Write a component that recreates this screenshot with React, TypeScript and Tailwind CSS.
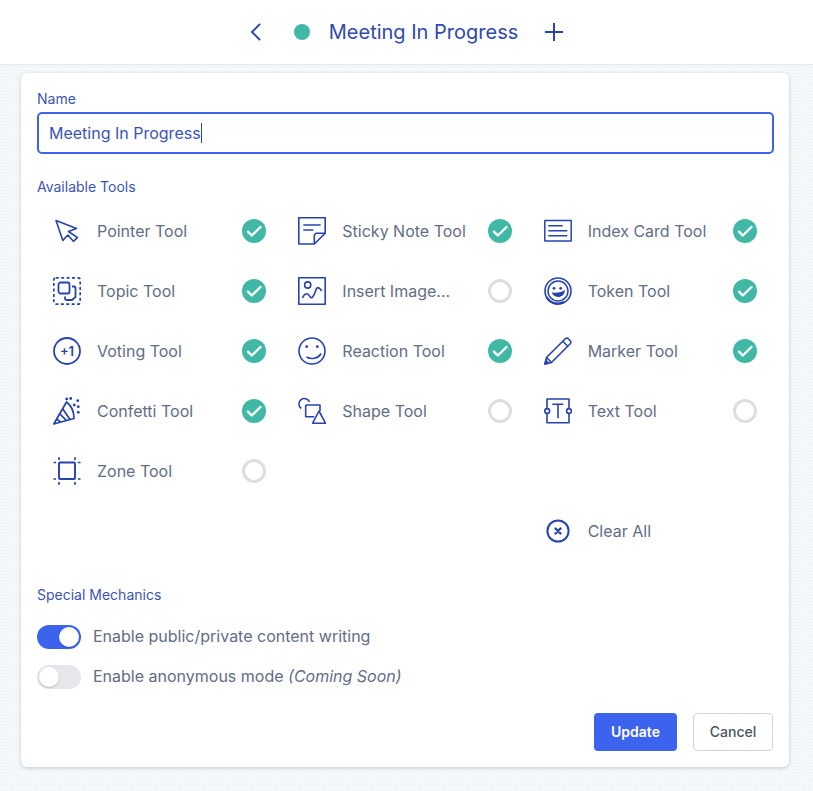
import React from "react";

const S = "#2743ad";

function Svg({ children, size = 28 }: { children: React.ReactNode; size?: number }) {
  return (
    <svg width={size} height={size} viewBox="0 0 28 28" fill="none" stroke={S} strokeWidth={1.6} strokeLinejoin="round">
      {children}
    </svg>
  );
}

const Pointer = () => (
  <Svg>
    <path d="M3 3.5 L23.5 11.5 L15.5 14.5 L24.5 20.7 L20.4 24.3 L14.8 18 L9.8 23.5 Z" />
  </Svg>
);
const Topic = () => (
  <Svg>
    <rect x="0.8" y="0.8" width="26.4" height="26.4" rx="2" strokeDasharray="3 2.4" strokeWidth={1.7} />
    <rect x="5.5" y="5.5" width="11" height="11" rx="2" strokeWidth={1.8} />
    <path d="M19 9.5 H21 a1.5 1.5 0 0 1 1.5 1.5 V20 L19 23 H13.5 a1.5 1.5 0 0 1 -1.5 -1.5 V19.5" strokeWidth={1.8} />
  </Svg>
);
const Voting = () => (
  <Svg>
    <circle cx="14" cy="14" r="13" strokeWidth={1.8} />
    <text x="14" y="18.5" textAnchor="middle" fontSize="13" fontWeight="600" fontFamily="Inter, sans-serif" fill={S} stroke="none">
      +1
    </text>
  </Svg>
);
const Confetti = () => (
  <Svg>
    <path d="M0.8 27 L13.5 5 C18 8.5 21 15 21 21.5 Z" strokeWidth={1.7} />
    <path d="M3.5 22 L8 25.3 M6.5 16.5 L13.5 23.6 M9.5 11.5 L17 22.6" strokeWidth={1.7} />
    <g fill={S} stroke="none">
      <circle cx="13.7" cy="2" r="1.4" />
      <circle cx="17.7" cy="1.5" r="1.4" />
      <circle cx="24.7" cy="3.7" r="1.4" />
      <circle cx="21.3" cy="8" r="1.4" />
      <circle cx="25.3" cy="9.7" r="1.4" />
      <circle cx="25.3" cy="15.3" r="1.4" />
    </g>
  </Svg>
);
const Zone = () => (
  <Svg>
    <rect x="6" y="5.5" width="16" height="16.5" rx="1" strokeWidth={1.9} />
    <path d="M0.5 5.5 H3 M25 5.5 H27.5 M0.5 22 H3 M25 22 H27.5 M6 0.3 V3 M22 0.3 V3 M6 25 V27.7 M22 25 V27.7" strokeWidth={1.7} />
  </Svg>
);
const Sticky = () => (
  <Svg>
    <path d="M16.3 27 H0.8 V0.8 H27.2 V16.3 Z" />
    <path d="M16.3 27 V18 L18 16.3 H27.2" />
    <path d="M5.3 8 H22.7 M5.3 13 H15.3" />
  </Svg>
);
const ImageI = () => (
  <Svg>
    <rect x="0.8" y="0.8" width="26.4" height="26.4" />
    <circle cx="9.7" cy="8" r="3.1" />
    <path d="M4.5 21 C7 15.5 10 16 11.5 19 C13.5 23 16 19 17.5 14 C19 9 21 10 23.7 14" />
  </Svg>
);
const Smile = () => (
  <Svg>
    <circle cx="14" cy="14" r="13" />
    <circle cx="8.7" cy="9.7" r="1.4" fill={S} stroke="none" />
    <circle cx="19.3" cy="9.7" r="1.4" fill={S} stroke="none" />
    <path d="M8.5 20 C13 22.5 20 22 23 16.5" />
  </Svg>
);
const Shape = () => (
  <Svg>
    <path d="M3.2 11.5 A5.5 5.5 0 1 1 11.5 5" />
    <path d="M7.7 8 H22 V14 M7.7 8 V19.7 H16.3" />
    <path d="M21 14 L27.5 26.2 H14.7 Z" />
  </Svg>
);
const IndexCard = () => (
  <Svg>
    <rect x="0.8" y="3.5" width="26.4" height="20.5" strokeWidth={1.5} />
    <path d="M4.3 8.7 H18.7 M4.3 13.7 H23.3 M4.3 18.7 H23.3" />
  </Svg>
);
const Token = () => (
  <Svg>
    <circle cx="14" cy="14" r="13" strokeWidth={1.6} />
    <path d="M2.5 20 A13 13 0 0 0 20 25" strokeWidth={2.4} />
    <circle cx="14" cy="14" r="10" strokeWidth={1.5} />
    <circle cx="10" cy="11.3" r="1.4" fill={S} stroke="none" />
    <circle cx="16.7" cy="11.3" r="1.4" fill={S} stroke="none" />
    <path d="M7.7 15.3 C12 16.5 17 15.5 21 13 C20.5 18 17.5 20 14 20 C11 20 8.5 18 7.7 15.3 Z" fill={S} stroke="none" />
  </Svg>
);
const Marker = () => (
  <Svg>
    <path d="M1 27 L2.5 20.5 L21.5 1.5 Q23 0.8 24 1.5 L26.5 4 Q27.2 5 26.5 6.5 L7.5 25.5 Z" />
    <path d="M2.5 20.5 L7.5 25.5 M19 4.5 L23.5 9" />
    <path d="M1 27 L1.8 23.5 L4.5 26.2 Z" fill={S} />
  </Svg>
);
const TextI = () => (
  <Svg>
    <path d="M3 11.5 V2 H25 V11.5 M3 16.5 V25.7 H25 V16.5" />
    <circle cx="3.2" cy="14" r="2.4" />
    <circle cx="25" cy="14" r="2.4" />
    <path d="M8.3 7.3 H19.3 M14 7.3 V21.3" />
  </Svg>
);
const ClearX = () => (
  <svg width="24" height="24" viewBox="0 0 24 24" fill="none" stroke={S}>
    <circle cx="12" cy="12" r="10.6" strokeWidth={2} />
    <path d="M9.5 9.5 L14.5 14.5 M14.5 9.5 L9.5 14.5" strokeWidth={2.4} strokeLinecap="round" />
  </svg>
);

function Mark({ on }: { on: boolean }) {
  if (!on) return <span className="block w-6 h-6 rounded-full border-[3px] border-[#dedede] bg-white" />;
  return (
    <span className="block w-6 h-6 rounded-full bg-[#41b8a5]">
      <svg width="24" height="24" viewBox="0 0 24 24" fill="none" stroke="#fff" strokeWidth={2.4} strokeLinecap="round" strokeLinejoin="round">
        <path d="M6 12.7 L9.8 16.5 L18.5 8" />
      </svg>
    </span>
  );
}

const tools: { name: string; Icon: () => React.ReactElement; on: boolean }[] = [
  { name: "Pointer Tool", Icon: Pointer, on: true },
  { name: "Sticky Note Tool", Icon: Sticky, on: true },
  { name: "Index Card Tool", Icon: IndexCard, on: true },
  { name: "Topic Tool", Icon: Topic, on: true },
  { name: "Insert Image...", Icon: ImageI, on: false },
  { name: "Token Tool", Icon: Token, on: true },
  { name: "Voting Tool", Icon: Voting, on: true },
  { name: "Reaction Tool", Icon: Smile, on: true },
  { name: "Marker Tool", Icon: Marker, on: true },
  { name: "Confetti Tool", Icon: Confetti, on: true },
  { name: "Shape Tool", Icon: Shape, on: false },
  { name: "Text Tool", Icon: TextI, on: false },
  { name: "Zone Tool", Icon: Zone, on: false },
];

function Toggle({ on }: { on: boolean }) {
  return (
    <span className={`flex w-11 h-6 rounded-full p-0.5 shrink-0 ${on ? "bg-[#3b63ee] justify-end" : "bg-[#e5e7eb] justify-start"}`}>
      <span className="block w-5 h-5 rounded-full bg-white shadow-[0_1px_2px_rgba(0,0,0,0.2)]" />
    </span>
  );
}

export default function App() {
  return (
    <div className="h-[791px] w-[813px] overflow-hidden bg-[#f5f9fc] bg-[radial-gradient(#e9f0f6_1px,transparent_1px)] bg-[length:3px_3px] font-['Inter',sans-serif]">
      <header className="h-[65px] pr-[3px] bg-white border-b border-[#e5eaf0] shadow-[0_1px_2px_rgba(0,0,0,0.04)] flex items-center justify-center text-[#2f49ae]">
        <svg width="24" height="24" viewBox="0 0 24 24" fill="none" stroke={S} strokeWidth={1.8} className="mr-[26px]">
          <path d="M15.5 5 L8 12.5 L15.5 20" transform="translate(0 -0.5)" strokeLinecap="round" strokeLinejoin="round" />
        </svg>
        <span className="w-4 h-4 rounded-full bg-[#41b8a5] mr-[19px]" />
        <span className="text-[20px] leading-none">Meeting In Progress</span>
        <svg width="24" height="24" viewBox="0 0 24 24" fill="none" stroke={S} strokeWidth={2} className="ml-6">
          <path d="M12 3 V21 M3 12 H21" />
        </svg>
      </header>
      <main className="mt-2 ml-[21px] w-[768px] h-[694px] bg-white rounded-md shadow-[0_1px_4px_rgba(0,0,0,0.2)] px-4 flex flex-col">
        <label className="mt-[18px] block text-[14px] leading-4 text-[#3a54b6]">Name</label>
        <div className="mt-[5px] -mr-px h-[42px] rounded-[5px] border-2 border-[#3b63ee] px-[10px] flex items-center text-[16px] text-[#3a54b6]">
          Meeting In Progress
          <span className="w-px h-5 bg-[#2743ad]" />
        </div>
        <div className="mt-[25px] text-[14px] leading-4 text-[#3a54b6]">Available Tools</div>
        <div className="mt-[6px] grid grid-cols-3">
          {tools.map(({ name, Icon, on }) => (
            <div key={name} className="h-[60px] flex items-center pl-4 pr-4">
              <Icon />
              <span className="ml-4 flex-1 text-[16px] text-[#626d87]">{name}</span>
              <Mark on={on} />
            </div>
          ))}
          <div className="h-[60px]" />
          <div className="h-[60px]" />
          <div className="h-[60px]" />
          <div className="h-[60px]" />
          <div className="h-[60px] flex items-center pl-[18px]">
            <ClearX />
            <span className="ml-[18px] text-[16px] text-[#626d87]">Clear All</span>
          </div>
        </div>
        <div className="mt-[26px] text-[14px] leading-4 text-[#3a54b6]">Special Mechanics</div>
        <div className="mt-[22px] flex items-center gap-3 text-[16px] leading-5 text-[#626d87]">
          <Toggle on />
          <span className="pb-0.5">Enable public/private content writing</span>
        </div>
        <div className="mt-4 flex items-center gap-3 text-[16px] leading-5 text-[#626d87]">
          <Toggle on={false} />
          <span className="pb-0.5">
            Enable anonymous mode <em>(Coming Soon)</em>
          </span>
        </div>
        <div className="mt-[24px] flex justify-end gap-4">
          <button className="w-[83px] h-[38px] pb-0.5 rounded bg-[#3b63ee] text-white text-[14px] font-semibold">Update</button>
          <button className="w-[80px] h-[38px] pb-0.5 rounded bg-white border border-[#d1d5db] text-[#4b5563] text-[14px] font-medium">Cancel</button>
        </div>
      </main>
    </div>
  );
}
